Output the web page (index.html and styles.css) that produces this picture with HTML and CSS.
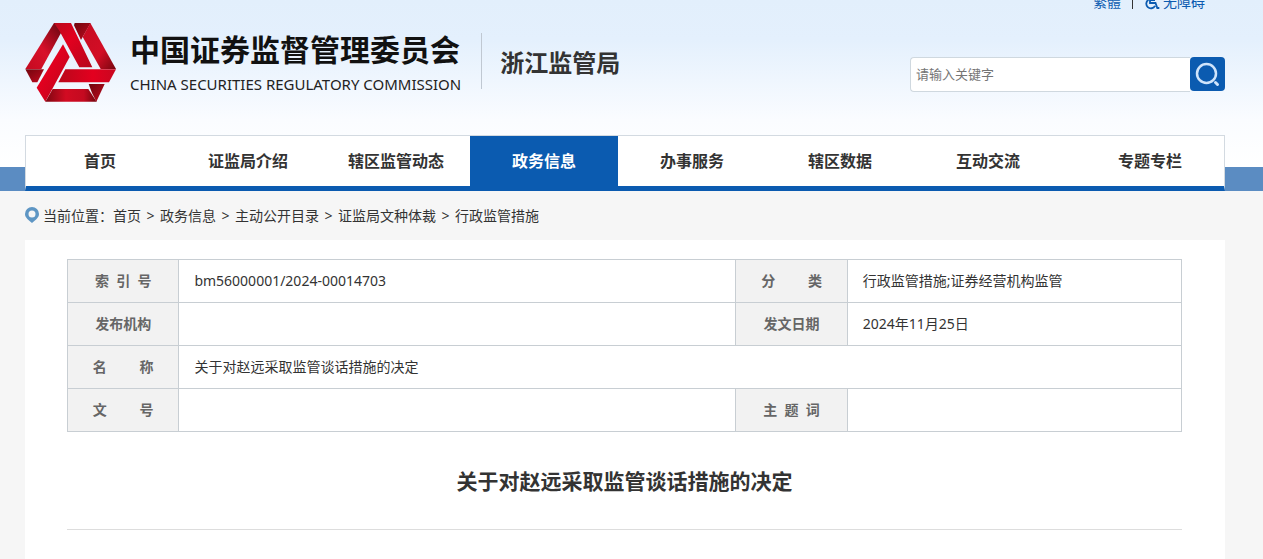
FILE: index.html
```html
<!DOCTYPE html>
<html lang="zh-CN">
<head>
<meta charset="utf-8">
<meta name="viewport" content="width=device-width, initial-scale=1">
<title>关于对赵远采取监管谈话措施的决定</title>
<link rel="stylesheet" href="styles.css">
</head>
<body>
<header class="site-header">
  <div class="utility">
    <a href="#">繁體</a>
    <span class="utility-sep"></span>
    <a href="#" class="access">
      <svg width="16" height="16" viewBox="0 0 16 16" fill="none" stroke="currentColor" stroke-width="1.800" aria-hidden="true"><path d="M6 3v6h5.500l1.800 5h2M6 6h5M4.500 5.800a4.600 4.600 0 1 0 6.500 6"/><circle cx="6" cy="1.500" r="1" /></svg>
      <span>无障碍</span>
    </a>
  </div>
  <div class="masthead">
    <a href="#" class="brand">
      <svg class="logo" viewBox="15 22 273 240" aria-hidden="true">
        <defs>
          <linearGradient id="leg" x1="0" y1="1" x2="1" y2="0"><stop offset="0" stop-color="#c40a20"/><stop offset=".45" stop-color="#d8102a"/><stop offset="1" stop-color="#65060f"/></linearGradient>
          <linearGradient id="down" x1="0" y1="0" x2="1" y2="1"><stop offset="0" stop-color="#b80a1c"/><stop offset=".4" stop-color="#e2001f"/><stop offset="1" stop-color="#b5081c"/></linearGradient>
          <linearGradient id="right" x1="0" y1="0" x2="1" y2="1"><stop offset="0" stop-color="#c50c22"/><stop offset=".6" stop-color="#d30d25"/><stop offset="1" stop-color="#75060f"/></linearGradient>
          <linearGradient id="flat" x1="0" y1="0" x2="1" y2="0"><stop offset="0" stop-color="#b9081b"/><stop offset=".6" stop-color="#e3001f"/><stop offset="1" stop-color="#c90720"/></linearGradient>
          <linearGradient id="base" x1="0" y1="0" x2="1" y2="0"><stop offset="0" stop-color="#7c0711"/><stop offset=".4" stop-color="#d20b22"/><stop offset=".75" stop-color="#c40a20"/><stop offset="1" stop-color="#70050d"/></linearGradient>
          <linearGradient id="fold" x1="0" y1="0" x2="1" y2="1"><stop offset="0" stop-color="#70050d"/><stop offset="1" stop-color="#c20b20"/></linearGradient>
        </defs>
        <path fill="url(#leg)" d="M102 25h20l3 26-61 112H16z"/>
        <path fill="url(#down)" d="M102 25h51l64 133h-39L118 48z"/>
        <path fill="url(#fold)" d="M164 25h48l-24 42-5 9-21-44z"/>
        <path fill="url(#right)" d="M211 25l77 138h-46L188 67z"/>
        <path fill="url(#fold)" d="M16 164h56l-20 39H37z"/>
        <path fill="url(#flat)" d="M136 164h152l-21 39H115z"/>
        <path fill="url(#base)" d="M98 223h107l25 38H76z"/>
        <path fill="url(#down)" d="M129 89l20 38-73 134-26-42z"/>
        <path fill="url(#fold)" d="M206 208h48l-25 53-13-26z"/>
      </svg>
      <span class="brand-text">
        <strong class="brand-name">中国证券监督管理委员会</strong>
        <span class="brand-en">CHINA SECURITIES REGULATORY COMMISSION</span>
      </span>
      <span class="bureau">浙江监管局</span>
    </a>
    <form class="search">
      <input type="text" class="search-input" placeholder="请输入关键字" aria-label="请输入关键字">
      <button type="button" class="search-button" aria-label="搜索">
        <svg width="25" height="25" viewBox="0 0 25 25" fill="none" stroke="#cfe4fb" stroke-width="2.500" stroke-linecap="round" aria-hidden="true"><circle cx="11.500" cy="11.500" r="9.500"/><path stroke-width="3" d="M20.500 20.500l2 2"/></svg>
      </button>
    </form>
  </div>
  <nav class="nav">
    <a href="#">首页</a>
    <a href="#">证监局介绍</a>
    <a href="#">辖区监管动态</a>
    <a href="#" class="active">政务信息</a>
    <a href="#">办事服务</a>
    <a href="#">辖区数据</a>
    <a href="#">互动交流</a>
    <a href="#">专题专栏</a>
  </nav>
</header>
<main class="content">
  <div class="crumbs">
    <svg class="pin" width="14" height="17" viewBox="0 0 14 17" aria-hidden="true"><path fill="#5e96c4" fill-rule="evenodd" d="M7 0a7 7 0 0 0-7 7c0 4 4 6 7 9 3-3 7-5 7-9a7 7 0 0 0-7-7zm0 3.500a3.500 3.500 0 1 1 0 7 3.500 3.500 0 0 1 0-7z"/></svg>
    <span>当前位置：</span>
    <a href="#">首页</a><span class="arrow">&gt;</span>
    <a href="#">政务信息</a><span class="arrow">&gt;</span>
    <a href="#">主动公开目录</a><span class="arrow">&gt;</span>
    <a href="#">证监局文种体裁</a><span class="arrow">&gt;</span>
    <a href="#">行政监管措施</a>
  </div>
  <article class="panel">
    <table class="info">
      <colgroup><col class="col-label"><col class="col-main"><col class="col-label"><col class="col-side"></colgroup>
      <tr><th scope="row">索&nbsp;&nbsp;引&nbsp;&nbsp;号</th><td>bm56000001/2024-00014703</td><th scope="row">分&nbsp;&nbsp;&nbsp;&nbsp;&nbsp;&nbsp;&nbsp;&nbsp;&nbsp;类</th><td>行政监管措施;证券经营机构监管</td></tr>
      <tr><th scope="row">发布机构</th><td></td><th scope="row">发文日期</th><td>2024年11月25日</td></tr>
      <tr><th scope="row">名&nbsp;&nbsp;&nbsp;&nbsp;&nbsp;&nbsp;&nbsp;&nbsp;&nbsp;称</th><td colspan="3">关于对赵远采取监管谈话措施的决定</td></tr>
      <tr><th scope="row">文&nbsp;&nbsp;&nbsp;&nbsp;&nbsp;&nbsp;&nbsp;&nbsp;&nbsp;号</th><td></td><th scope="row">主&nbsp;&nbsp;题&nbsp;&nbsp;词</th><td></td></tr>
    </table>
    <h1 class="title">关于对赵远采取监管谈话措施的决定</h1>
  </article>
</main>
</body>
</html>
```
FILE: styles.css
```css
* { box-sizing: border-box; }

body {
  display: flex;
  flex-direction: column;
  min-height: 100vh;
  margin: 0;
  background: #f6f6f6;
  color: #333;
  font: 14px/20px "Noto Sans", "Noto Sans CJK SC", sans-serif;
}

a { color: inherit; text-decoration: none; }

.site-header {
  padding: 0 38px 0 25px;
  background:
    linear-gradient(#5b8cc2, #5b8cc2) bottom / 100% 24px no-repeat,
    linear-gradient(#e2effc 0, #e4f0fd 40px, #fafcff 120px, #fff 167px);
}

.utility {
  display: flex;
  justify-content: flex-end;
  align-items: flex-end;
  gap: 11px;
  height: 10px;
  padding-right: 20px;
  color: #0b5bb0;
  line-height: 16px;
}

.utility-sep { width: 1px; height: 14px; margin-bottom: 1px; background: #333; }
.access { display: flex; align-items: flex-end; gap: 3px; }

.masthead {
  display: flex;
  justify-content: space-between;
  align-items: flex-start;
  height: 125px;
  padding-top: 12px;
}

.brand { display: flex; white-space: nowrap; }
.logo { width: 91px; height: 80px; }

.brand-text {
  display: flex;
  flex-direction: column;
  margin: 8px 0 0 14px;
}

.brand-name { color: #111; font-size: 30px; line-height: 40px; }
.brand-en { padding-top: 4px; color: #222; font-size: 15px; line-height: 20px; }

.bureau {
  height: 56px;
  margin: 11px 0 0 20px;
  padding-left: 18px;
  border-left: 1px solid #c0c8d2;
  font-size: 24px;
  font-weight: bold;
  line-height: 60px;
}

.search { display: flex; width: 315px; margin-top: 35px; }

.search-input {
  flex: 1;
  min-width: 0;
  height: 35px;
  padding: 0 5px 2px;
  border: 1px solid #cfd8df;
  border-right: 0;
  border-radius: 4px 0 0 4px;
  background: #fff;
  font: 13px/20px "Noto Sans", "Noto Sans CJK SC", sans-serif;
}

.search-input::placeholder { color: #757575; }

.search-button {
  display: flex;
  align-items: center;
  justify-content: center;
  width: 35px;
  height: 34px;
  padding: 0;
  border: 0;
  border-radius: 4px;
  background: #0b5bb0;
}

.nav {
  display: flex;
  border: 1px solid #d3dae1;
  border-bottom: 5px solid #0b5bb0;
  background: #fff;
}

.nav a {
  flex: 0 1 148px;
  font-size: 16px;
  font-weight: bold;
  line-height: 50px;
  text-align: center;
}

.nav a:last-child { margin-left: auto; }
.nav .active { background: #0b5bb0; color: #fff; }

.content {
  display: flex;
  flex: 1;
  flex-direction: column;
  padding: 0 38px 0 25px;
}

.crumbs { display: flex; align-items: center; height: 49px; }
.pin { margin-right: 4px; }
.arrow { width: 19px; text-align: center; }

.panel { flex: 1; padding: 19px 43px 0 42px; background: #fff; }

.info {
  width: 100%;
  table-layout: fixed;
  border-collapse: collapse;
}

.col-label { width: 10%; }
.col-main { width: 50%; }
.col-side { width: 30%; }

.info th, .info td {
  height: 43px;
  padding: 0 15px;
  border: 1px solid #c8ced3;
  text-align: left;
}

.info th {
  padding: 0;
  background: #f2f2f2;
  color: #666;
  text-align: center;
}

.title {
  margin: 0;
  padding: 34px 0 33px;
  border-bottom: 1px solid #ddd;
  font-size: 21px;
  line-height: 30px;
  text-align: center;
}
```
